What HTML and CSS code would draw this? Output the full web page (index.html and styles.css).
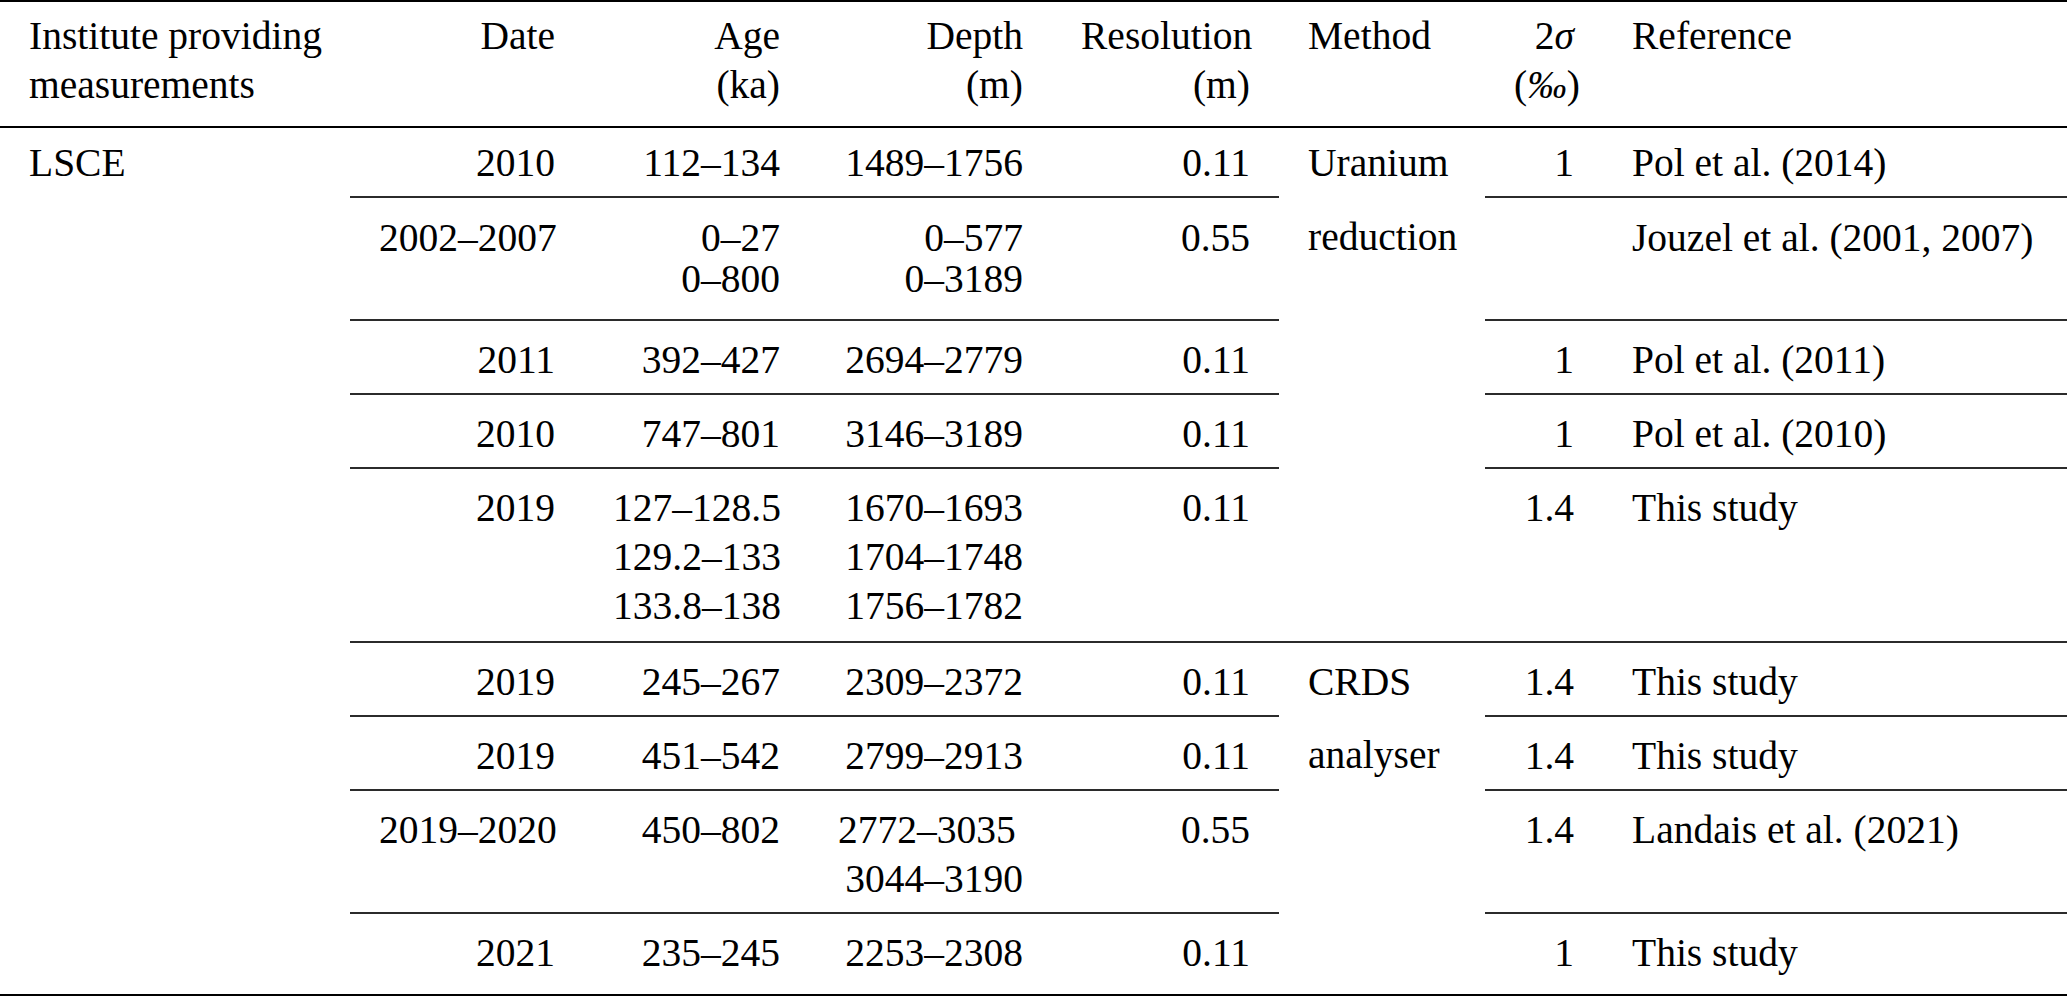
FILE: index.html
```html
<!DOCTYPE html>
<html lang="en">
<head>
<meta charset="utf-8">
<title>Measurements table</title>
<link rel="stylesheet" href="styles.css">
</head>
<body>
<table class="data">
  <colgroup>
    <col class="c-inst">
    <col class="c-date">
    <col class="c-age">
    <col class="c-depth">
    <col class="c-res">
    <col class="c-method">
    <col class="c-sigma">
    <col class="c-ref">
  </colgroup>
  <thead>
    <tr class="head">
      <th class="l">Institute providing<br>measurements</th>
      <th class="r">Date</th>
      <th class="r">Age<br>(ka)</th>
      <th class="r">Depth<br>(m)</th>
      <th class="r">Resolution<br>(m)</th>
      <th class="l">Method</th>
      <th class="r">2<i>σ</i><br>(<i>‰</i>)</th>
      <th class="l">Reference</th>
    </tr>
  </thead>
  <tbody>
    <tr class="first">
      <td class="l">LSCE</td>
      <td class="r rule">2010</td>
      <td class="r rule">112–134</td>
      <td class="r rule">1489–1756</td>
      <td class="r rule">0.11</td>
      <td class="l">Uranium</td>
      <td class="r rule">1</td>
      <td class="l rule">Pol et al. (2014)</td>
    </tr>
    <tr class="tight-row">
      <td class="l"></td>
      <td class="r rule">2002–2007</td>
      <td class="r rule tight">0–27<br>0–800</td>
      <td class="r rule tight">0–577<br>0–3189</td>
      <td class="r rule">0.55</td>
      <td class="l">reduction</td>
      <td class="r rule"></td>
      <td class="l rule">Jouzel et al. (2001, 2007)</td>
    </tr>
    <tr>
      <td class="l"></td>
      <td class="r rule">2011</td>
      <td class="r rule">392–427</td>
      <td class="r rule">2694–2779</td>
      <td class="r rule">0.11</td>
      <td class="l"></td>
      <td class="r rule">1</td>
      <td class="l rule">Pol et al. (2011)</td>
    </tr>
    <tr>
      <td class="l"></td>
      <td class="r rule">2010</td>
      <td class="r rule">747–801</td>
      <td class="r rule">3146–3189</td>
      <td class="r rule">0.11</td>
      <td class="l"></td>
      <td class="r rule">1</td>
      <td class="l rule">Pol et al. (2010)</td>
    </tr>
    <tr class="tall-row">
      <td class="l"></td>
      <td class="r rule">2019</td>
      <td class="r rule">127–128.5<br>129.2–133<br>133.8–138</td>
      <td class="r rule">1670–1693<br>1704–1748<br>1756–1782</td>
      <td class="r rule">0.11</td>
      <td class="l rule"></td>
      <td class="r rule">1.4</td>
      <td class="l rule">This study</td>
    </tr>
    <tr>
      <td class="l"></td>
      <td class="r rule">2019</td>
      <td class="r rule">245–267</td>
      <td class="r rule">2309–2372</td>
      <td class="r rule">0.11</td>
      <td class="l">CRDS</td>
      <td class="r rule">1.4</td>
      <td class="l rule">This study</td>
    </tr>
    <tr>
      <td class="l"></td>
      <td class="r rule">2019</td>
      <td class="r rule">451–542</td>
      <td class="r rule">2799–2913</td>
      <td class="r rule">0.11</td>
      <td class="l">analyser</td>
      <td class="r rule">1.4</td>
      <td class="l rule">This study</td>
    </tr>
    <tr>
      <td class="l"></td>
      <td class="r rule">2019–2020</td>
      <td class="r rule">450–802</td>
      <td class="r rule">2772–3035&nbsp;<br>3044–3190</td>
      <td class="r rule">0.55</td>
      <td class="l"></td>
      <td class="r rule">1.4</td>
      <td class="l rule">Landais et al. (2021)</td>
    </tr>
    <tr class="last">
      <td class="l"></td>
      <td class="r">2021</td>
      <td class="r">235–245</td>
      <td class="r">2253–2308</td>
      <td class="r">0.11</td>
      <td class="l"></td>
      <td class="r">1</td>
      <td class="l">This study</td>
    </tr>
  </tbody>
</table>
</body>
</html>
```

FILE: styles.css
```css
html, body {
  margin: 0;
  padding: 0;
  background: #ffffff;
}

.data {
  width: 2067px;
  table-layout: fixed;
  border-collapse: collapse;
  border-spacing: 0;
  font-family: "Liberation Serif", "Times New Roman", serif;
  font-size: 39.5px;
  line-height: 49px;
  color: #000;
  border-top: 2px solid #000;
}

.c-inst { width: 350px; }
.c-date { width: 234px; }
.c-age { width: 225px; }
.c-depth { width: 243px; }
.c-res { width: 227px; }
.c-method { width: 206px; }
.c-sigma { width: 118px; }
.c-ref { width: 464px; }

.data th,
.data td {
  padding: 15px 29px 8px 29px;
  vertical-align: top;
  font-weight: normal;
  white-space: nowrap;
}

.data .l { text-align: left; }
.data .r { text-align: right; }

.data .rule { border-bottom: 2px solid #2b2b2b; }

.head th {
  padding-top: 10px;
  padding-bottom: 16px;
  border-bottom: 2px solid #000;
}

.first td {
  padding-top: 11px;
  padding-bottom: 8px;
}

.tight-row td {
  padding-top: 16px;
  padding-bottom: 16px;
}

.tight-row .tight {
  line-height: 41px;
  padding-top: 20px;
  padding-bottom: 19px;
}

.tall-row td {
  padding-bottom: 10px;
}

.last td {
  padding-top: 15px;
  padding-bottom: 16px;
  border-bottom: 2px solid #000;
}
```
